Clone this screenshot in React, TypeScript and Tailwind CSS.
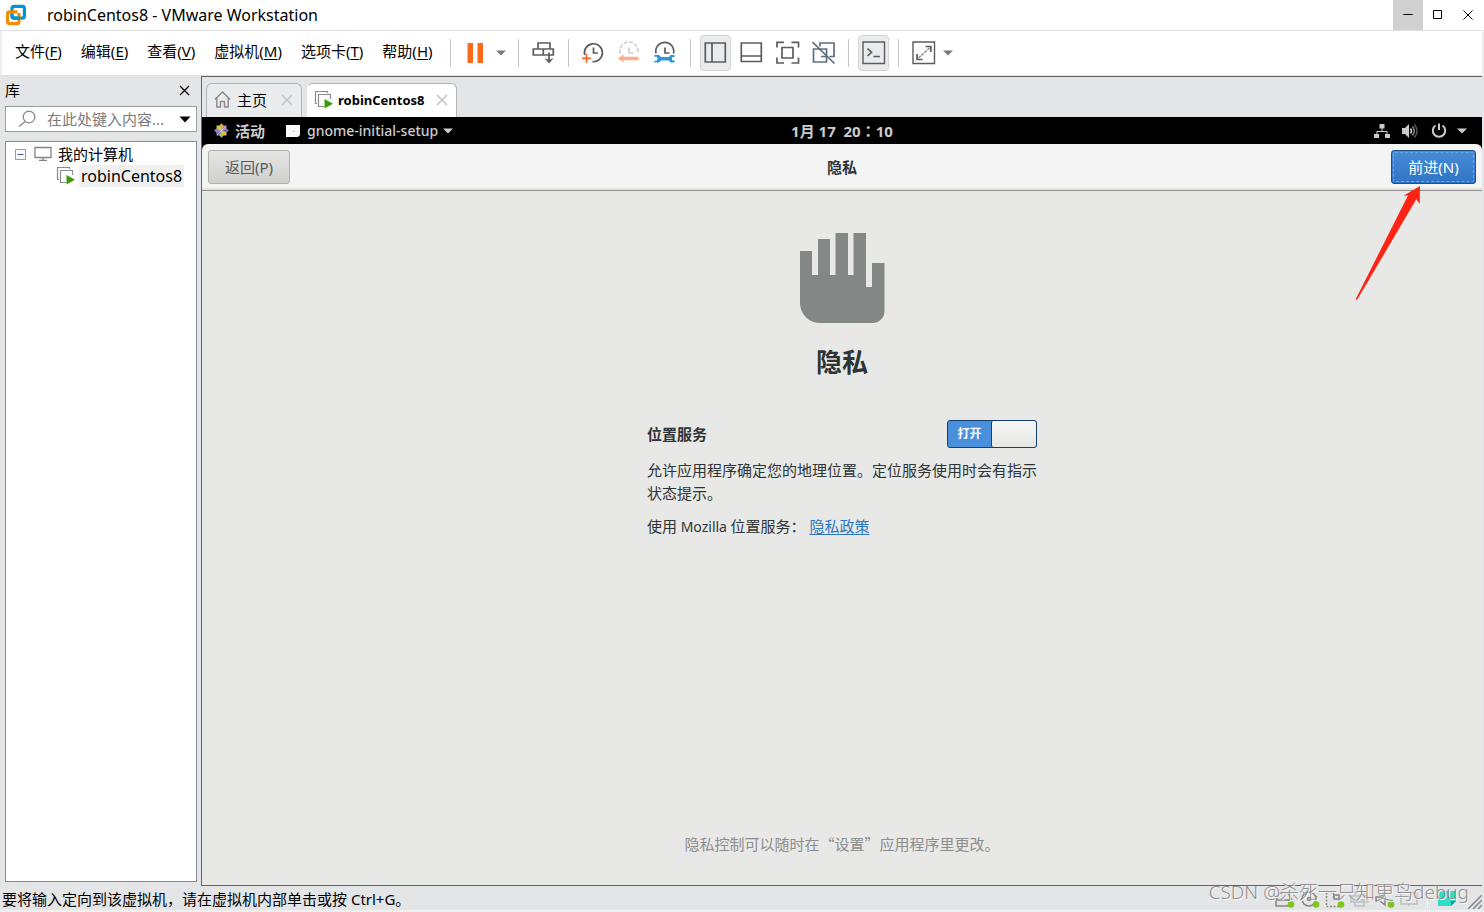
import { ReactNode, useState } from "react";

const menus = [
  { label: "文件", key: "F" },
  { label: "编辑", key: "E" },
  { label: "查看", key: "V" },
  { label: "虚拟机", key: "M" },
  { label: "选项卡", key: "T" },
  { label: "帮助", key: "H" },
];

function Separator() {
  return <div className="h-7 w-px shrink-0 bg-[#c4c4c4]" />;
}

function ToolButton({ label, active, children }: { label: string; active?: boolean; children: ReactNode }) {
  return (
    <button
      type="button"
      aria-label={label}
      aria-pressed={active}
      className={
        active
          ? "flex h-9 w-[31px] shrink-0 items-center justify-center rounded border border-[#d3d3d5] bg-[#eaebed]"
          : "flex h-9 w-[31px] shrink-0 items-center justify-center"
      }
    >
      <svg width="24" height="24" viewBox="0.5 0.5 24 24" fill="none" stroke="#5a5c5e" strokeWidth="1.7" className="shrink-0">
        {children}
      </svg>
    </button>
  );
}

function Caret({ label }: { label: string }) {
  return (
    <button type="button" aria-label={label} className="shrink-0">
      <svg width="10" height="6" viewBox="0 0 10 6" fill="#7a7a7a">
        <path d="M0 .5h10L5 5.5z" />
      </svg>
    </button>
  );
}

function VmIcon() {
  return (
    <svg width="20" height="20" viewBox="0 0 20 20" fill="none" className="shrink-0">
      <path d="M3 13.5H1.5v-12h12V3" stroke="#8c8c8c" strokeWidth="1.2" />
      <path d="M10 16.500H4.500v-12h12V9" stroke="#8c8c8c" strokeWidth="1.200" />
      <path d="M10.500 9v9.500L19 13.800z" fill="#3f9b0b" />
    </svg>
  );
}

function TitleBar() {
  return (
    <header className="flex h-[31px] shrink-0 items-center border-b border-[#e1e1e1] bg-white">
      <svg width="22" height="22" viewBox="0 0 22 22" fill="none" strokeWidth="3.2" className="ml-[5px]">
        <rect x="7" y="2.3" width="12.4" height="11.8" rx="2" stroke="#0095d3" />
        <path d="M12.5 7.8H4.6a2 2 0 0 0-2 2v7.8a2 2 0 0 0 2 2H12a2 2 0 0 0 2-2V9" stroke="#f38b00" />
        <path d="M7 10.5v1.6a2 2 0 0 0 2 2h6" stroke="#0095d3" />
      </svg>
      <h1 className="ml-5 text-base leading-5">robinCentos8 - VMware Workstation</h1>
      <div className="mr-px ml-auto flex self-stretch">
        <button type="button" aria-label="最小化" className="flex w-[30px] items-center justify-center bg-[#d1d1d1]">
          <svg width="10" height="10" viewBox="0 0 10 10" stroke="#000"><path d="M.5 4.5h9" /></svg>
        </button>
        <button type="button" aria-label="最大化" className="flex w-[30px] items-center justify-center">
          <svg width="10" height="10" viewBox="0 0 10 10" fill="none" stroke="#000"><path d="M.5.5h8v8h-8z" /></svg>
        </button>
        <button type="button" aria-label="关闭" className="flex w-[30px] items-center justify-center">
          <svg width="10" height="10" viewBox="0 0 10 10" stroke="#000"><path d="M.5.5l9 9M9.5.5l-9 9" /></svg>
        </button>
      </div>
    </header>
  );
}

function ToolBar() {
  return (
    <div className="flex h-[45px] shrink-0 items-center border-x-2 border-b border-x-[#eeeeee] border-b-[#e1e1e1] bg-white">
      <nav className="flex w-[448px] shrink-0 gap-[19px] pb-1 pl-[13px] text-[15px] leading-5 whitespace-nowrap">
        {menus.map((m) => (
          <button type="button" key={m.key}>
            {m.label}(<span className="underline underline-offset-2">{m.key}</span>)
          </button>
        ))}
      </nav>
      <Separator />
      <div className="flex w-[67px] shrink-0 items-center justify-center gap-2.5 pl-0.5">
        <button type="button" aria-label="挂起">
          <svg width="20" height="22" viewBox="0 0 20 22" fill="#fb6a1c"><path d="M1.500 1H7v20H1.500zM11.500 1H17v20h-5.500z" /></svg>
        </button>
        <Caret label="电源选项" />
      </div>
      <Separator />
      <div className="flex w-[49px] shrink-0 justify-center">
        <ToolButton label="发送 Ctrl+Alt+Del">
          <path d="M6.500 2.500h12v6h-12zM1.800 8.500h20v6h-20zM11.800 8.500v6M17.500 12v9" />
          <path d="M12.800 17.500l4.700 5.500 4.700-5.500-4.700 2z" fill="#5a5c5e" stroke="none" />
        </ToolButton>
      </div>
      <Separator />
      <div className="flex w-[121px] shrink-0 justify-center gap-[5px] pr-0.5">
        <ToolButton label="拍摄快照">
          <path d="M4.200 14.500A9 9 0 1 1 12 21.200" />
          <path d="M13 7v5.500h4.500" />
          <path d="M1.500 17.800h9M6 13.300v9" stroke="#f0682c" />
        </ToolButton>
        <ToolButton label="恢复快照">
          <path d="M3.800 13a9 9 0 1 1 17.300 0" stroke="#cfcfcf" strokeDasharray="4 1.500" />
          <path d="M12.500 7v5.500h4.500" stroke="#cfcfcf" />
          <path d="M1.500 18l5.500-4v2.300h15v3.400H7V22z" fill="#fdae8b" stroke="none" />
        </ToolButton>
        <ToolButton label="管理快照">
          <path d="M3.500 13a9 9 0 1 1 17.500 0" />
          <path d="M12.500 7v5.500h4.500" />
          <path d="M2 14.500h4.500l2 2h8l1.500-2h4v2.200h-2.500v3h2.500V22h-4l-1.500-2h-8l-2 2H2l-.3-1.700h2.500l1-2-1-2H1.700z" fill="#2f94d8" stroke="none" />
        </ToolButton>
      </div>
      <Separator />
      <div className="flex w-[157px] shrink-0 justify-center gap-[5px]">
        <ToolButton label="显示库" active>
          <path d="M1.800 2.500h20v19h-20zM8.500 2.500v19" />
        </ToolButton>
        <ToolButton label="显示缩略图栏">
          <path d="M1.800 2.500h20v18.500h-20zM1.800 15.500h20" />
        </ToolButton>
        <ToolButton label="全屏">
          <path d="M6.500 7h11v10.500h-11zM1.500 7V1.800h7M16 1.800h7V7M23 17v5.500h-7M8.500 22.500h-7V17" />
        </ToolButton>
        <ToolButton label="Unity">
          <path d="M8.500 6V2.500h14v13.500H18M8 8.500H2v13h13v-5M8 8.500h7v7.500H9.500" stroke="#5f6e7c" />
          <path d="M1 1.500l22 21.500" stroke="#5f6e7c" />
        </ToolButton>
      </div>
      <Separator />
      <div className="flex w-[49px] shrink-0 justify-center">
        <ToolButton label="控制台视图" active>
          <path d="M1.500 1.500h21.500v21.500h-21.500z" strokeWidth="1.400" />
          <path d="M6 8l4 3.800L6 15.500M12 16h6.500" />
        </ToolButton>
      </div>
      <Separator />
      <div className="flex shrink-0 items-center gap-1 pl-[9px]">
        <ToolButton label="自由拉伸">
          <path d="M1.500 1.500h21.500v21.500h-21.500z" strokeWidth="1.400" />
          <path d="M14 6h5.300v5.500M5.500 13.500V19h5.500" />
          <path d="M7 17.500L18 7.500" stroke="#999" strokeDasharray="3 1" />
        </ToolButton>
        <Caret label="拉伸选项" />
      </div>
    </div>
  );
}

function Sidebar() {
  return (
    <aside className="flex w-[201px] shrink-0 flex-col pr-1 pl-[5px]">
      <div className="flex h-[30px] items-center justify-between pr-[7px] pb-0.5">
        <h2 className="text-[15px] leading-5">库</h2>
        <button type="button" aria-label="关闭库">
          <svg width="11" height="11" viewBox="0 0 11 11" stroke="#000" strokeWidth="1.300"><path d="M1 1l9 9M10 1L1 10" /></svg>
        </button>
      </div>
      <div className="flex h-[26px] items-center border border-[#9b9fa5] bg-white">
        <svg width="18" height="18" viewBox="0 0 18 18" fill="none" stroke="#8a8a8a" strokeWidth="1.300" className="ml-3 shrink-0">
          <circle cx="11" cy="7" r="5.800" />
          <path d="M7 11.500L1 16.500" />
        </svg>
        <input
          type="text"
          aria-label="搜索库"
          placeholder="在此处键入内容..."
          className="ml-[11px] w-0 flex-1 bg-transparent text-[15px] leading-5 outline-none placeholder:text-[#7b7b7b]"
        />
        <button type="button" aria-label="搜索选项" className="mr-[5px] shrink-0">
          <svg width="12" height="7" viewBox="0 0 12 7"><path d="M.5.5h11L6 6.500z" /></svg>
        </button>
      </div>
      <ul className="mt-[9px] mb-1 flex-1 border border-[#868b97] bg-white pt-px text-[15px] leading-[22px]">
        <li>
          <div className="flex items-center pl-[9px]">
            <svg width="11" height="11" viewBox="0 0 11 11" fill="none">
              <path d="M.5.5h10v10H.5z" stroke="#9a9a9a" fill="#fafafa" />
              <path d="M2.500 5.500h6" stroke="#4058a0" />
            </svg>
            <svg width="18" height="16" viewBox="0 0 18 16" fill="none" stroke="#858585" strokeWidth="1.300" className="mr-1.5 ml-2">
              <path d="M1 1.500h16v10H1zM9 11.500v2.500M5 14.300h8" />
            </svg>
            我的计算机
          </div>
          <ul>
            <li className="flex items-center pl-[50px]">
              <VmIcon />
              <span className="ml-[3px] bg-[#f0f0f0] px-[2px] text-base leading-[22px]">robinCentos8</span>
            </li>
          </ul>
        </li>
      </ul>
    </aside>
  );
}

function CloseTab({ label }: { label: string }) {
  return (
    <button type="button" aria-label={label} className="mr-2 ml-auto">
      <svg width="12" height="12" viewBox="0 0 12 12" stroke="#c4c4c4" strokeWidth="1.600"><path d="M1 1l10 10M11 1L1 11" /></svg>
    </button>
  );
}

function Tabs() {
  return (
    <div className="flex h-10 shrink-0 items-end gap-[5px] bg-[#e4e5e7] pl-1 text-black">
      <div className="flex h-[34px] w-24 items-center rounded-t-md border border-b-0 border-[#b4b4b4] bg-[#eaebed] pb-0.5 pl-[7px]">
        <svg width="17" height="17" viewBox="0 0 17 17" fill="none" stroke="#8b8b8b" strokeWidth="1.400">
          <path d="M.8 8.500L8.500 1l7.700 7.500M2.800 7v9H6.500v-5.500h4V16h3.700V7" />
        </svg>
        <a href="#home" className="ml-1.5 text-[15px] leading-5">主页</a>
        <CloseTab label="关闭主页" />
      </div>
      <div className="flex h-[34px] w-[150px] items-center rounded-t-md border border-b-0 border-[#b4b4b4] border-l-white bg-white pb-0.5 pl-1.5">
        <VmIcon />
        <a href="#vm" className="ml-1 text-[13px] leading-5 font-bold">robinCentos8</a>
        <CloseTab label="关闭 robinCentos8" />
      </div>
    </div>
  );
}

function GnomeBar() {
  return (
    <div className="grid h-[27px] shrink-0 grid-cols-3 items-center bg-black text-sm leading-5 font-medium text-[#cccccc]">
      <div className="flex items-center pl-3">
        <svg width="15" height="15" viewBox="0 0 16 16" stroke="#ddd" strokeWidth=".4">
          <path d="M8 8L3 3h5z M8 8L3 8V3z" fill="#9ccd2a" />
          <path d="M8 8l5-5v5z M8 8V3h5z" fill="#b869b8" />
          <path d="M8 8l5 5H8z M8 8h5v5z" fill="#efa724" />
          <path d="M8 8l-5 5V8z M8 8v5H3z" fill="#5b6bb0" />
          <path d="M8 8L6 3l2-2.500L10 3z" fill="#efa724" />
          <path d="M8 8l5-2 2.500 2L13 10z" fill="#5b6bb0" />
          <path d="M8 8l2 5-2 2.500L6 13z" fill="#9ccd2a" />
          <path d="M8 8l-5 2L.5 8 3 6z" fill="#b869b8" />
        </svg>
        <button type="button" className="ml-1.5 text-[15px] font-bold">活动</button>
        <button type="button" className="ml-5 flex items-center">
          <svg width="16" height="14" viewBox="0 0 16 14"><path d="M1 1h14v10l-2 2H1z" fill="#fafafa" /><path d="M7 8l1.500-1.500L10 8z" fill="#ccc" /></svg>
          <span className="ml-1.5">gnome-initial-setup</span>
          <svg width="10" height="6" viewBox="0 0 10 6" fill="#ccc" className="ml-[5px]"><path d="M0 .5h10L5 5.500z" /></svg>
        </button>
      </div>
      <time className="text-center text-[15px] leading-5 font-bold whitespace-pre">
        1月 17  20<span className="font-['Noto_Sans_CJK_TC',sans-serif]" lang="zh-TW">：</span>10
      </time>
      <button type="button" aria-label="系统菜单" className="ml-auto flex items-center pr-[15px]">
        <svg width="16" height="16" viewBox="0 0 16 16" fill="#ccc"><path d="M5.500 1h5v4.500h-2V8h5v3H16v4h-5v-4h1.500V9h-9v2H5v4H0v-4h2.500V8h5V5.500h-2z" /></svg>
        <svg width="16" height="16" viewBox="0 0 16 16" fill="none" stroke="#ccc" strokeWidth="1.500" className="ml-3">
          <path d="M0 5h3l4-4v14l-4-4H0z" fill="#ccc" stroke="none" />
          <path d="M8.500 5.500q2 2.500 0 5" />
          <path d="M10.500 3.500q3.500 4.500 0 9" stroke="#888" />
          <path d="M12.500 1.500q5 6.500 0 13" stroke="#555" />
        </svg>
        <svg width="16" height="16" viewBox="0 0 16 16" fill="none" stroke="#ccc" strokeWidth="2" className="ml-[13px]">
          <path d="M4.500 2.500a6.200 6.200 0 1 0 7 0M8 .5v6.500" />
        </svg>
        <svg width="10" height="6" viewBox="0 0 10 6" fill="#ccc" className="ml-2.5"><path d="M0 .5h10L5 5.500z" /></svg>
      </button>
    </div>
  );
}

function SetupWindow() {
  const [located, setLocated] = useState(true);
  return (
    <section className="relative flex flex-1 flex-col bg-black text-[15px] text-[#2e3436]">
      <div className="grid h-[47px] shrink-0 grid-cols-3 items-center rounded-t-md border-b border-[#8f8f89] bg-[#f4f4f4] px-1.5 shadow-[inset_0_-2px_1px_#e0e0dd]">
        <button type="button" className="h-[34px] w-[82px] justify-self-start rounded-[3px] border border-[#b0b0ac] bg-linear-to-b from-[#e6e6e4] to-[#cfcfcc] text-[#555a5c]">
          返回(P)
        </button>
        <h2 className="text-center text-[15px] leading-5 font-bold">隐私</h2>
        <button type="button" className="h-[34px] w-[85px] justify-self-end rounded-[3px] border border-[#1c5187] bg-linear-to-b from-[#478cd8] to-[#2f75c4] p-px text-white">
          <span className="flex h-full items-center justify-center rounded-[2px] border border-dashed border-[#6ea3de]">前进(N)</span>
        </button>
      </div>
      <svg width="66" height="116" viewBox="0 0 66 116" className="pointer-events-none absolute top-[41px] right-[61px]">
        <path d="M65 1l-.3 18-3.400-4.700L2 115l-1.300-.8L53 10.500 48.500 10.800z" fill="#ff2314" />
      </svg>
      <main className="flex flex-1 flex-col items-center bg-[#e8e8e6] pt-[42px] pb-[30px]">
        <svg width="85" height="90" viewBox="0 0 85 90" fill="#838786" className="shrink-0">
          <path d="M0 18h12v24h6V6h12v36h5.500V0H48v42h5.500V0H66v54h6V30h12.500v48a12 12 0 0 1-12 12H20A20 20 0 0 1 0 70z" />
        </svg>
        <h1 className="mt-[19px] text-[26px] leading-10 font-bold">隐私</h1>
        <div className="mt-[38px] w-[390px]">
          <div className="flex items-center justify-between">
            <span id="location" className="font-bold">位置服务</span>
            <label className="relative flex h-7 w-[90px] overflow-hidden rounded-[3px] border border-[#15406f] bg-[#4a8fdb]">
              <input
                type="checkbox"
                role="switch"
                aria-labelledby="location"
                checked={located}
                onChange={(e) => setLocated(e.target.checked)}
                className="absolute inset-0 opacity-0"
              />
              <span className="flex w-[43px] items-center justify-center text-xs font-bold text-white">打开</span>
              <span className="flex-1 rounded-[2px] border-l border-[#15406f] bg-linear-to-b from-[#f6f6f6] to-[#e6e6e4]" />
            </label>
          </div>
          <p className="mt-[11px] leading-[23px]">允许应用程序确定您的地理位置。定位服务使用时会有指示状态提示。</p>
          <p className="mt-2.5 leading-[23px]">
            使用<span className="text-sm leading-5"> Mozilla </span>位置服务： <a href="#privacy" className="text-[#2a76c6] underline underline-offset-2">隐私政策</a>
          </p>
        </div>
        <p className="mt-auto font-['Noto_Sans_CJK_SC',sans-serif] text-[#8b8e8f]" lang="zh-CN">隐私控制可以随时在“设置”应用程序里更改。</p>
      </main>
    </section>
  );
}

function Device({ label, online, children }: { label: string; online?: boolean; children: ReactNode }) {
  return (
    <button type="button" aria-label={label}>
      <svg width="20" height="18" viewBox="0 0 20 18" fill="none" stroke={online ? "#858585" : "#bcbec0"} strokeWidth="1.500">
        {children}
        {online && <circle cx="16" cy="13.500" r="3.300" fill="#7bc618" stroke="none" />}
      </svg>
    </button>
  );
}

function StatusBar() {
  return (
    <footer className="relative flex h-[26px] shrink-0 items-center border-b-2 border-[#f0f0f0] pl-0.5 text-[15px] leading-5">
      <p className="pt-0.5 whitespace-nowrap">要将输入定向到该虚拟机，请在虚拟机内部单击或按 Ctrl+G。</p>
      <div className="mt-1 ml-auto flex items-center gap-[5px]">
        <Device label="硬盘" online><path d="M1 9l4-7h8l4 7M1 9h14v6H1z" /></Device>
        <Device label="光盘" online><circle cx="9" cy="8" r="7" /><circle cx="9" cy="8" r="1.500" /></Device>
        <Device label="网络适配器" online><path d="M1.500 1.500h7v5M1.500 1.500v14h14" strokeDasharray="2 1.500" /><path d="M9 4h5v4H9z" /></Device>
        <Device label="打印机"><path d="M5 5V1h9v4M1 5h17v6H1zM5 9h9v6H5z" /></Device>
        <Device label="声卡" online><path d="M1 6h4l5-4v12l-5-4H1z" /></Device>
        <Device label="显示器"><path d="M1 2h16v11H1zM5 6h7M9 13v2" /></Device>
      </div>
      <div className="mr-2.5 ml-[7px] h-5 w-px bg-white" />
      <svg width="18" height="18" viewBox="0 0 18 18"><path d="M0 2h18v10l-5 5H0z" fill="#30ddc8" /><path d="M13 17v-5h5z" fill="#1c9a8c" /></svg>
      <svg width="14" height="14" viewBox="0 0 14 14" stroke="#858585" strokeWidth="1.500" className="mt-2 mr-0.5 ml-3"><path d="M0 14L14 0M5 14l9-9M10 14l4-4" /></svg>
      <p className="pointer-events-none absolute right-[15px] bottom-[4px] text-[19px] leading-7 font-light whitespace-nowrap text-[#8f8f8f] [text-shadow:1px_1px_0_#f8f8f8]">
        CSDN @杀死一只知更鸟debug
      </p>
    </footer>
  );
}

export default function App() {
  return (
    <div className="flex min-h-screen flex-col bg-[#e4e5e7] font-['Noto_Sans','Noto_Sans_CJK_SC',sans-serif] text-black">
      <TitleBar />
      <ToolBar />
      <div className="flex flex-1">
        <Sidebar />
        <div className="mr-0.5 flex min-w-0 flex-1 flex-col border-y border-l border-[#646464]">
          <Tabs />
          <GnomeBar />
          <SetupWindow />
        </div>
      </div>
      <StatusBar />
    </div>
  );
}
